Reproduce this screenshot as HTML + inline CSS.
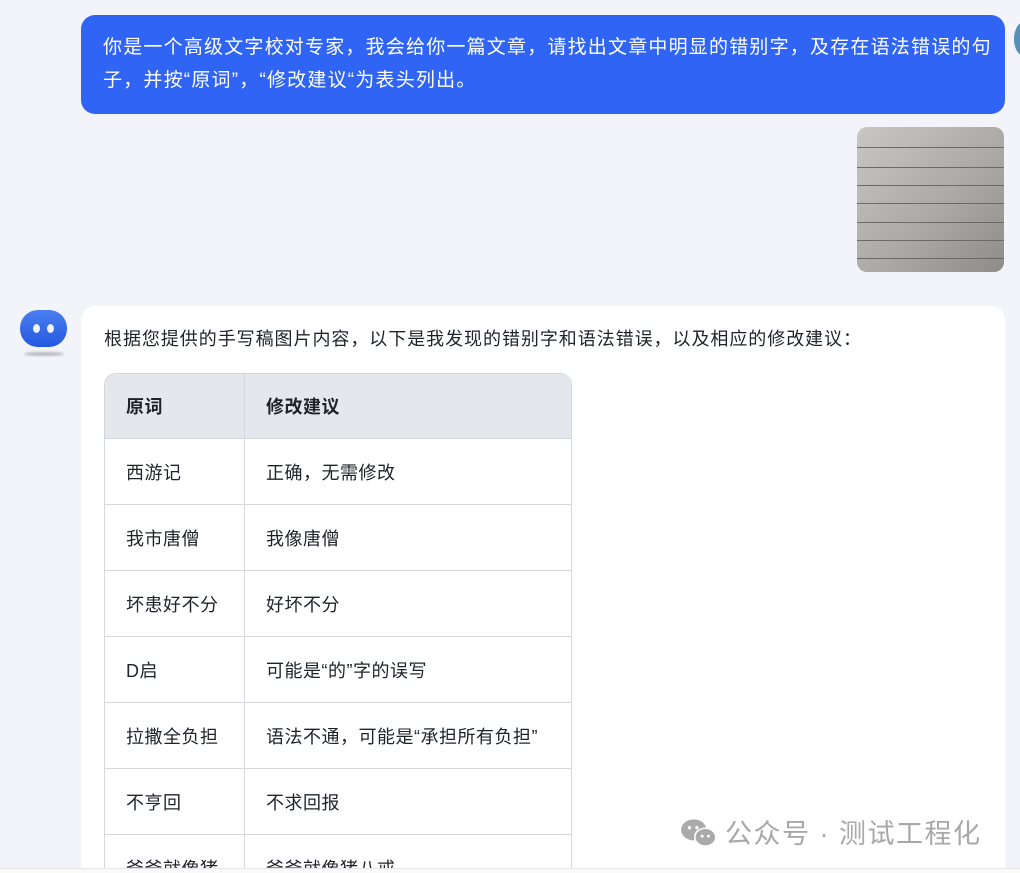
<!DOCTYPE html>
<html><head><meta charset="utf-8"><style>
*{margin:0;padding:0;box-sizing:border-box}
html,body{width:1020px;height:873px;overflow:hidden}
body{background:#f3f4f9;font-family:"Liberation Sans","Noto Sans CJK SC",sans-serif;position:relative;color:#1f2329}
.bubble{position:absolute;left:81px;top:15px;width:924px;height:99px;background:#2f64f5;border-radius:14px;color:#fff;font-size:19px;letter-spacing:1.2px;line-height:33px;padding:16px 10px 0 22px}
.img{position:absolute;left:857px;top:127px;width:147px;height:145px;border-radius:10px;background:linear-gradient(135deg,#c9c7c3,#a9a7a2 60%,#8e8c88);overflow:hidden}
.img i{position:absolute;left:0;right:0;height:1px;background:#6b6a66}
.av{position:absolute;left:20px;top:310px;width:47px;height:37px;border-radius:18px;background:linear-gradient(#4b7ff0,#2458e0)}
.av:before,.av:after{content:"";position:absolute;top:14px;width:7px;height:9px;border-radius:50%;background:#eef3ff}
.av:before{left:13px}.av:after{left:27px}
.sh{position:absolute;left:24px;top:352px;width:40px;height:4px;border-radius:50%;background:#b8bac2;filter:blur(1px)}
.card{position:absolute;left:81px;top:306px;width:924px;height:562px;background:#fff;border-radius:14px 14px 0 0;overflow:hidden}
.intro{position:absolute;left:23px;top:19px;font-size:18px;letter-spacing:0.95px;line-height:28px}
table{position:absolute;left:23px;top:67px;width:468px;border-collapse:separate;border-spacing:0;border:1px solid #d5d7dd;border-radius:12px;overflow:hidden;font-size:18px;letter-spacing:0.5px}
td,th{height:66px;padding-left:21px;text-align:left;border-bottom:1px solid #d5d7dd}
th{height:65px;background:#e6e7ec;font-weight:bold}
td:first-child,th:first-child{width:140px;border-right:1px solid #d5d7dd}
.wm{position:absolute;left:679px;top:812px;font-size:27px;color:#a8a8a8;letter-spacing:1.5px;white-space:nowrap}
.bar{position:absolute;left:0;top:868px;width:1020px;height:5px;background:#fafafa;border-top:1px solid #e6e6e6}
</style></head><body>
<div class="bubble">你是一个高级文字校对专家，我会给你一篇文章，请找出文章中明显的错别字，及存在语法错误的句子，并按“原词”，“修改建议“为表头列出。</div>
<div style="position:absolute;left:1014px;top:22px;width:20px;height:34px;border-radius:50%;background:#5a8fb8"></div>
<div class="img"><i style="top:20px"></i><i style="top:40px"></i><i style="top:58px"></i><i style="top:76px"></i><i style="top:95px"></i><i style="top:113px"></i><i style="top:131px"></i></div>
<div class="av"></div><div class="sh"></div>
<div class="card">
<div class="intro">根据您提供的手写稿图片内容，以下是我发现的错别字和语法错误，以及相应的修改建议：</div>
<table>
<tr><th>原词</th><th>修改建议</th></tr>
<tr><td>西游记</td><td>正确，无需修改</td></tr>
<tr><td>我市唐僧</td><td>我像唐僧</td></tr>
<tr><td>坏患好不分</td><td>好坏不分</td></tr>
<tr><td>D启</td><td>可能是“的”字的误写</td></tr>
<tr><td>拉撒全负担</td><td>语法不通，可能是“承担所有负担”</td></tr>
<tr><td>不亨回</td><td>不求回报</td></tr>
<tr><td>爸爸就像猪</td><td>爸爸就像猪八戒</td></tr>
</table>
</div>
<div class="wm"><svg width="40" height="32" viewBox="0 0 38 30" style="vertical-align:-6px;margin-right:6px"><ellipse cx="14" cy="12" rx="12" ry="10" fill="#aaa"/><ellipse cx="25" cy="19" rx="10" ry="8.5" fill="#aaa" stroke="#fff" stroke-width="1.5"/><circle cx="10" cy="10" r="1.6" fill="#fff"/><circle cx="17" cy="10" r="1.6" fill="#fff"/><circle cx="22" cy="18" r="1.4" fill="#fff"/><circle cx="28" cy="18" r="1.4" fill="#fff"/></svg>公众号 · 测试工程化</div>
<div class="bar"></div>
</body></html>
